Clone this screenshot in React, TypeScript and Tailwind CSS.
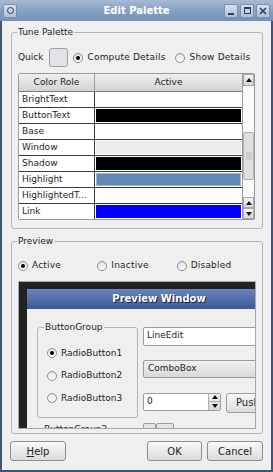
const F = "font-['DejaVu_Sans','Liberation_Sans',sans-serif]";

function Radio({ on }: { on?: boolean }) {
  return (
    <span className="flex h-[10px] w-[10px] shrink-0 items-center justify-center rounded-full border border-[#8c8c8c] bg-gradient-to-b from-[#e4e4e4] to-white">
      {on && <span className="h-[4px] w-[4px] rounded-full bg-black" />}
    </span>
  );
}

function TitleBtn({ children }: { children: React.ReactNode }) {
  return (
    <span className="flex h-[14px] w-[14px] items-center justify-center rounded-[2px] border border-[#7890b0] bg-gradient-to-b from-[#d6e0ee] to-[#aebfd8] text-[#2c3e58]">
      {children}
    </span>
  );
}

function Button({ children, w }: { children: React.ReactNode; w: string }) {
  return (
    <div className={`flex h-[20px] items-center justify-center rounded-[3px] border border-[#8e8e8e] bg-gradient-to-b from-[#f8f8f8] to-[#dcdcdc] text-[10px] text-[#222] ${w}`}>
      {children}
    </div>
  );
}

const rows: [string, string][] = [
  ["BrightText", "bg-white"],
  ["ButtonText", "bg-black"],
  ["Base", "bg-white"],
  ["Window", "bg-[#ececec]"],
  ["Shadow", "bg-black"],
  ["Highlight", "bg-[#6289b5] border border-[#9ab4d2]"],
  ["HighlightedT...", "bg-white"],
  ["Link", "bg-[#0000ff]"],
];

export default function App() {
  return (
    <div className={`${F} flex h-[472px] w-[273px] flex-col overflow-hidden bg-[#3f5678] text-[9px] text-[#1e1e1e]`}>
      {/* window title */}
      <div className="relative flex h-[21px] shrink-0 items-center justify-between bg-gradient-to-b from-[#a7bad5] via-[#87a0c4] to-[#7690b8] px-[3px]">
        <TitleBtn>
          <span className="h-[7px] w-[7px] rounded-full border-[1.5px] border-[#2c3e58]" />
        </TitleBtn>
        <span className="absolute left-0 right-0 text-center text-[10px] font-bold text-white">Edit Palette</span>
        <div className="flex gap-[2px]">
          <TitleBtn>
            <span className="mt-[6px] h-[2px] w-[6px] bg-[#2c3e58]" />
          </TitleBtn>
          <TitleBtn>
            <span className="h-[7px] w-[7px] border-[1.5px] border-t-2 border-[#2c3e58]" />
          </TitleBtn>
          <TitleBtn>
            <svg width="8" height="8" viewBox="0 0 8 8">
              <path d="M1 1L7 7M7 1L1 7" stroke="#2c3e58" strokeWidth="1.6" />
            </svg>
          </TitleBtn>
        </div>
      </div>

      {/* body */}
      <div className="mx-[2px] mb-[2px] flex flex-1 flex-col bg-[#efefef] pl-[9px] pr-[8px] pt-[6px]">
        {/* Tune Palette */}
        <fieldset className="h-[202px] rounded-[3px] border border-[#b4b4b4] px-[6px]">
          <legend className="ml-[-1px] px-[1px] leading-[11px]">Tune Palette</legend>
          <div className="mt-[10px] flex items-center">
            <span>Quick</span>
            <span className="ml-[6px] h-[19px] w-[19px] rounded-[3px] border border-[#a0a0a8] bg-[#e2e2ea]" />
            <span className="ml-[5px]"><Radio on /></span>
            <span className="ml-[4px] tracking-[0.2px]">Compute Details</span>
            <span className="ml-[9px]"><Radio /></span>
            <span className="ml-[5px] tracking-[0.2px]">Show Details</span>
          </div>
          <div className="mt-[6px] flex h-[147px] w-[237px] rounded-[2px] border border-[#9a9a9a]">
            <div className="flex flex-1 flex-col">
              <div className="grid h-[19px] grid-cols-[76px_1fr] border-b border-[#7a7a7a] bg-gradient-to-b from-[#f0f0f0] to-[#d2d2d2]">
                <span className="flex items-center justify-center border-r border-[#9a9a9a]">Color Role</span>
                <span className="flex items-center justify-center">Active</span>
              </div>
              <div className="grid flex-1 grid-cols-[75px_1fr] gap-px bg-[#3a3a3a]">
                {rows.map(([name, cls]) => (
                  <div key={name} className="contents">
                    <span className="flex h-[15px] items-center bg-white pl-[3px]">{name}</span>
                    <span className="flex h-[15px] bg-white p-px">
                      <span className={`flex-1 ${cls}`} />
                    </span>
                  </div>
                ))}
              </div>
            </div>
            <div className="flex w-[12px] flex-col border-l border-[#9a9a9a] bg-[#fafafa]">
              <span className="flex h-[12px] items-center justify-center border border-[#a8a8a8] bg-gradient-to-b from-[#f4f4f4] to-[#d8d8d8]">
                <svg width="6" height="4" viewBox="0 0 6 4"><path d="M0 4L3 0L6 4Z" fill="#111" /></svg>
              </span>
              <span className="h-[46px]" />
              <span className="flex h-[48px] items-center justify-center rounded-[2px] border border-[#b0b0b0] bg-[#dedede]">
                <span className="h-[8px] w-[6px] bg-[radial-gradient(#b8b8b8_0.6px,transparent_0.8px)] bg-[length:2px_2px]" />
              </span>
              <span className="flex-1" />
              <span className="flex h-[11px] items-center justify-center border border-[#a8a8a8] bg-gradient-to-b from-[#f4f4f4] to-[#d8d8d8]">
                <svg width="6" height="4" viewBox="0 0 6 4"><path d="M0 4L3 0L6 4Z" fill="#111" /></svg>
              </span>
              <span className="flex h-[11px] items-center justify-center border border-[#a8a8a8] bg-gradient-to-b from-[#f4f4f4] to-[#d8d8d8]">
                <svg width="6" height="4" viewBox="0 0 6 4"><path d="M0 0L3 4L6 0Z" fill="#111" /></svg>
              </span>
            </div>
          </div>
        </fieldset>

        {/* Preview */}
        <fieldset className="mt-[7px] h-[198px] rounded-[3px] border border-[#b4b4b4] px-[6px]">
          <legend className="ml-[-1px] px-[1px] leading-[11px]">Preview</legend>
          <div className="mt-[12px] grid grid-cols-3">
            <div className="flex items-center gap-[4px]"><Radio on /><span className="tracking-[0.2px]">Active</span></div>
            <div className="flex items-center gap-[4px]"><Radio /><span className="tracking-[0.2px]">Inactive</span></div>
            <div className="flex items-center gap-[4px]"><Radio /><span className="tracking-[0.2px]">Disabled</span></div>
          </div>
          <div className="mt-[8px] h-[148px] w-[238px] overflow-hidden border border-[#a8a8a8] bg-[#222] pl-[8px] pt-[7px]">
            <div className="w-[264px] bg-[#efefef]">
              <div className="flex h-[20px] items-center justify-center bg-gradient-to-b from-[#6a84bc] to-[#3e5896] text-[10px] font-bold text-white [text-shadow:1px_1px_0_#1a2440]">
                Preview Window
              </div>
              <div className="flex gap-[5px] pl-[10px] pt-[13px]">
                <fieldset className="h-[96px] w-[101px] shrink-0 rounded-[3px] border border-[#b4b4b4] pl-[9px]">
                  <legend className="ml-[-3px] px-[1px] leading-[11px]">ButtonGroup</legend>
                  <div className="mt-[14px] flex flex-col gap-[9px]">
                    <div className="flex items-center gap-[4px]"><Radio on /><span>RadioButton1</span></div>
                    <div className="flex items-center gap-[4px]"><Radio /><span>RadioButton2</span></div>
                    <div className="flex items-center gap-[4px]"><Radio /><span>RadioButton3</span></div>
                  </div>
                </fieldset>
                <div className="flex w-[150px] flex-col pt-[5px]">
                  <div className="flex h-[19px] items-center rounded-[2px] border border-[#9c9c9c] bg-white pl-[3px]">LineEdit</div>
                  <div className="mt-[14px] flex h-[18px] items-center rounded-[2px] border border-[#9c9c9c] bg-gradient-to-b from-[#f2f2f2] to-[#d8d8d8] pl-[4px]">ComboBox</div>
                  <div className="mt-[15px] flex gap-[5px]">
                    <div className="flex h-[18px] w-[78px] rounded-[2px] border border-[#9c9c9c] bg-white">
                      <span className="flex flex-1 items-center pl-[3px]">0</span>
                      <div className="flex w-[12px] flex-col border-l border-[#b0b0b0] bg-gradient-to-b from-[#f2f2f2] to-[#d8d8d8]">
                        <span className="flex flex-1 items-center justify-center border-b border-[#b0b0b0]">
                          <svg width="6" height="4" viewBox="0 0 6 4"><path d="M0 4L3 0L6 4Z" fill="#111" /></svg>
                        </span>
                        <span className="flex flex-1 items-center justify-center">
                          <svg width="6" height="4" viewBox="0 0 6 4"><path d="M0 0L3 4L6 0Z" fill="#111" /></svg>
                        </span>
                      </div>
                    </div>
                    <div className="flex h-[20px] w-[50px] items-center rounded-[3px] border border-[#9c9c9c] bg-gradient-to-b from-[#f8f8f8] to-[#dcdcdc] pl-[9px] text-[10px]">PushButton</div>
                  </div>
                </div>
              </div>
              <div className="flex gap-[5px] pl-[10px] pt-[5px]">
                <div className="w-[101px] pl-[7px]">ButtonGroup2</div>
                <div className="flex">
                  <span className="h-[12px] w-[13px] rounded-[2px] border border-[#9c9c9c] bg-[#e4e4e4]" />
                  <span className="h-[12px] w-[18px] rounded-[2px] border border-[#9c9c9c] bg-[#e4e4e4]" />
                </div>
              </div>
            </div>
          </div>
        </fieldset>

        {/* buttons */}
        <div className="mt-[7px] flex items-center">
          <div className="-ml-px">
            <Button w="w-[56px]"><span><span className="underline">H</span>elp</span></Button>
          </div>
          <div className="flex-1" />
          <Button w="w-[55px]">OK</Button>
          <div className="w-[5px]" />
          <Button w="w-[56px]">Cancel</Button>
        </div>
      </div>
    </div>
  );
}
